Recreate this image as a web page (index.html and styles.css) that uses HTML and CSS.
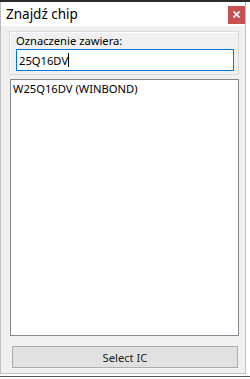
FILE: index.html
```html
<!DOCTYPE html>
<html>
<head>
<meta charset="utf-8">
<link rel="stylesheet" href="styles.css">
</head>
<body>
<div class="screen">
  <div class="window">
    <div class="titlebar">
      <span class="title">Znajdź chip</span>
      <div class="close">
        <svg width="7" height="7" viewBox="0 0 7 7"><path d="M0.5 0.5L6.5 6.5M6.5 0.5L0.5 6.5" stroke="#fff" stroke-width="1.6"/></svg>
      </div>
    </div>
    <div class="client">
      <div class="group">
        <div class="label">Oznaczenie zawiera:</div>
        <div class="input"><span>25Q16DV</span><span class="caret"></span></div>
      </div>
      <div class="list">
        <div class="item">W25Q16DV (WINBOND)</div>
      </div>
      <div class="button">Select IC</div>
    </div>
  </div>
</div>
</body>
</html>
```
FILE: styles.css
```css
* { box-sizing: border-box; }
html, body { margin: 0; padding: 0; background: #ffffff; }
body { width: 250px; height: 379px; overflow: hidden; font-family: "Noto Sans", "Open Sans", sans-serif; font-size: 11px; color: #000; }
.screen { border-top: 2px solid #2b2b2b; height: 377px; border-bottom: 1px solid #555; }
.window { width: 246px; height: 372px; border: 1px solid #bfbfbf; border-top: none; display: flex; flex-direction: column; background: #f0f0f0; }
.titlebar { height: 24px; background: #fff; display: flex; align-items: center; justify-content: space-between; padding-left: 5px; padding-right: 0; }
.title { font-size: 13.5px; color: #000; }
.close { width: 17px; height: 18px; background: #c75050; display: flex; align-items: center; justify-content: center; margin-top: 1px; }
.close svg { display: block; }
.client { flex: 1; display: flex; flex-direction: column; padding: 5px 6px 5px 8px; }
.group { height: 44px; border: 1px solid #dcdcdc; box-shadow: inset 1px 1px 0 #fff; padding: 2px 4px 0 6px; }
.label { font-size: 11.2px; line-height: 14px; color: #000; }
.input { margin-top: 1px; height: 22px; border: 1px solid #0078d7; background: #fff; display: flex; align-items: center; padding-left: 2px; font-size: 11.2px; }
.caret { display: inline-block; width: 1px; height: 14px; background: #000; }
.list { margin-top: 4px; margin-left: 1px; height: 257px; border: 1px solid #828790; background: #fff; padding: 1px 2px; }
.item { font-size: 11.2px; line-height: 15px; }
.button { margin-top: 10px; margin-left: 3px; margin-right: 1px; height: 22px; border: 1px solid #adadad; background: #e1e1e1; display: flex; align-items: center; justify-content: center; font-size: 11.2px; color: #222; }
```
